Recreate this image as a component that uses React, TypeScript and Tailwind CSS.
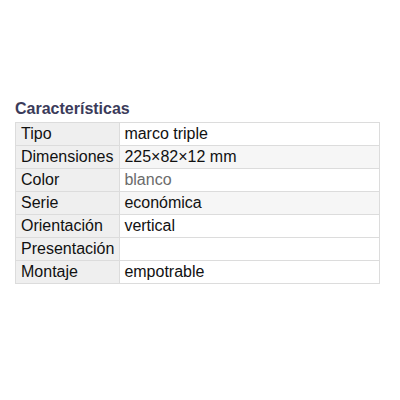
export default function App() {
  const rows: [string, string, boolean, boolean][] = [
    ["Tipo", "marco triple", false, false],
    ["Dimensiones", "225×82×12 mm", false, true],
    ["Color", "blanco", true, false],
    ["Serie", "económica", false, true],
    ["Orientación", "vertical", false, false],
    ["Presentación", "", false, false],
    ["Montaje", "empotrable", false, false],
  ];
  return (
    <div
      className="w-[400px] h-[400px] bg-white pt-[100px] pl-[15px]"
      style={{ fontFamily: '"Liberation Sans", Arial, sans-serif' }}
    >
      <h2 className="text-[16px] leading-[18px] font-bold text-[#3b3b5a] mb-[4px]">
        Características
      </h2>
      <table className="border-collapse w-[365px] text-[16px] leading-[18px] text-[#111]">
        <tbody>
          {rows.map(([k, v, muted, striped]) => (
            <tr key={k} className={striped ? "bg-[#f6f6f6]" : "bg-white"}>
              <td className="w-[104px] h-[23px] border border-[#dcdcdc] bg-[#efefef] px-[5px] py-[2px] whitespace-nowrap">
                {k}
              </td>
              <td
                className={`h-[23px] border border-[#dcdcdc] px-[4px] py-[2px] whitespace-nowrap ${
                  muted ? "text-[#6b6b6b]" : ""
                }`}
              >
                {v}
              </td>
            </tr>
          ))}
        </tbody>
      </table>
    </div>
  );
}
